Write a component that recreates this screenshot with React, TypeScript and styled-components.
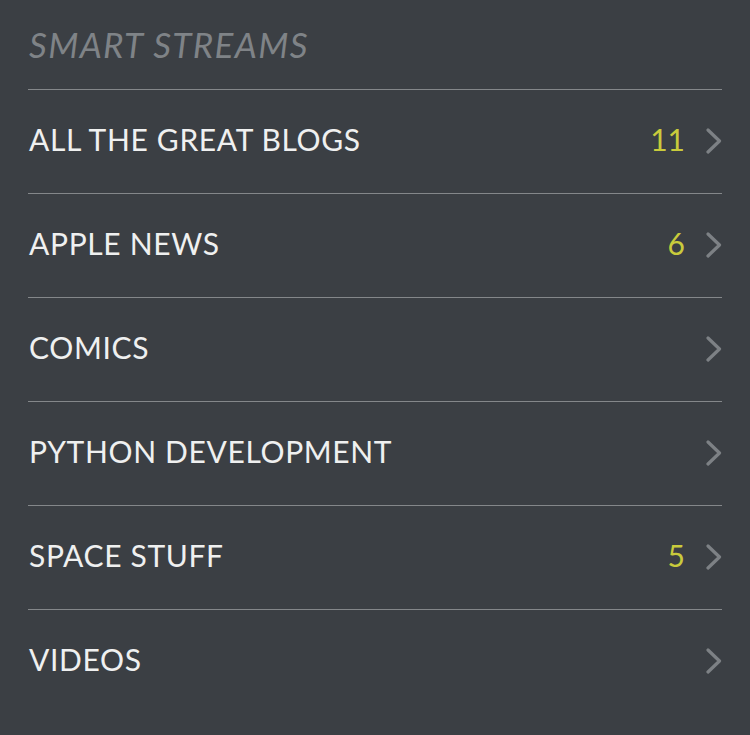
import React from "react";
import styled, { createGlobalStyle } from "styled-components";

const Global = createGlobalStyle`
  html, body { margin: 0; padding: 0; background: #3b3f44; }
  body { font-family: Lato, "Open Sans", sans-serif; }
`;

const Page = styled.div`
  width: 750px;
  height: 735px;
  box-sizing: border-box;
  padding: 0 28px;
  background: #3b3f44;
  overflow: hidden;
`;

const Header = styled.h2`
  margin: 0;
  height: 89px;
  box-sizing: border-box;
  padding: 23px 0 0 1px;
  font-size: 35px;
  font-weight: 400;
  font-style: italic;
  color: #7f8387;
  letter-spacing: 1.35px;
  line-height: 42px;
`;

const List = styled.ul`
  list-style: none;
  margin: 0;
  padding: 0;
`;

const Row = styled.li`
  display: flex;
  align-items: center;
  height: 104px;
  box-sizing: border-box;
  border-top: 1px solid #84878a;
  padding-left: 1px;
`;

const Title = styled.span`
  flex: 1;
  font-size: 30px;
  color: #eff0f0;
  letter-spacing: 0.65px;
  padding-bottom: 5px;
`;

const Count = styled.span`
  font-size: 30px;
  color: #c9cb3c;
  margin-right: 21px;
  padding-bottom: 5px;
`;

const ChevronIcon = styled.svg`
  display: block;
  margin-bottom: 2px;
`;

const Chevron = () => (
  <ChevronIcon width="16" height="26" viewBox="0 0 16 26">
    <path d="M2 2 L13.5 13 L2 24" fill="none" stroke="#7d8185" strokeWidth="3.2" strokeLinecap="round" strokeLinejoin="round" />
  </ChevronIcon>
);

const items: { name: string; count?: number }[] = [
  { name: "ALL THE GREAT BLOGS", count: 11 },
  { name: "APPLE NEWS", count: 6 },
  { name: "COMICS" },
  { name: "PYTHON DEVELOPMENT" },
  { name: "SPACE STUFF", count: 5 },
  { name: "VIDEOS" },
];

export default function App() {
  return (
    <Page>
      <Global />
      <Header>SMART STREAMS</Header>
      <List>
        {items.map((it) => (
          <Row key={it.name}>
            <Title>{it.name}</Title>
            {it.count !== undefined && <Count>{it.count}</Count>}
            <Chevron />
          </Row>
        ))}
      </List>
    </Page>
  );
}
